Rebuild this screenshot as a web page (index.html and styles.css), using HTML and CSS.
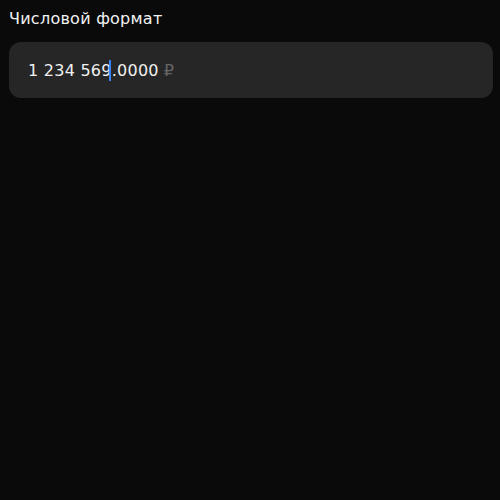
FILE: index.html
```html
<!DOCTYPE html>
<html lang="ru">
<head>
<meta charset="utf-8">
<link rel="stylesheet" href="styles.css">
</head>
<body>
<div class="page">
  <div class="label">Числовой формат</div>
  <div class="field">
    <span class="value">1 234 569</span><span class="caret"></span><span class="value">.0000</span><span class="currency">₽</span>
  </div>
</div>
</body>
</html>
```
FILE: styles.css
```css
html, body {
  margin: 0;
  padding: 0;
  background: #0a0a0a;
  height: 100%;
}
.page {
  padding: 8px 7px 0 9px;
  font-family: "DejaVu Sans", sans-serif;
  font-size: 16px;
  letter-spacing: 0.25px;
  color: #f2f2f2;
}
.label {
  line-height: 22px;
}
.field {
  margin-top: 12px;
  height: 56px;
  border-radius: 12px;
  background: #262626;
  display: flex;
  align-items: center;
  padding: 0 19px;
}
.value {
  color: #f0f0f0;
}
.caret {
  display: inline-block;
  width: 2px;
  height: 21px;
  background: #3b82f6;
  margin: 0 1px 0 -3px;
}
.currency {
  color: #666;
  margin-left: 5px;
}
```
